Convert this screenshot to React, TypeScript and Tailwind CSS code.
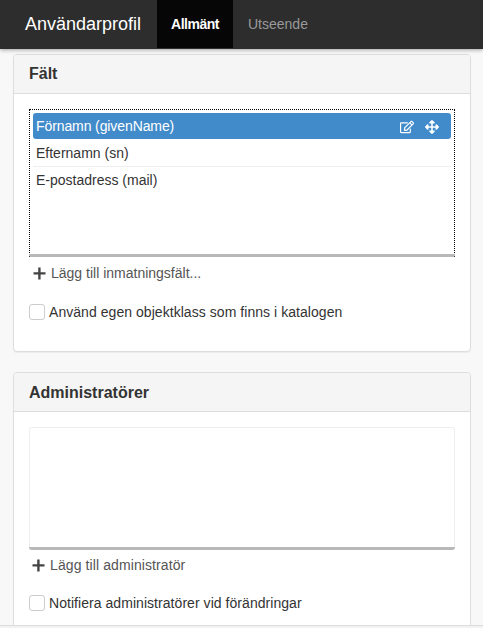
import { FaRegEdit, FaArrowsAlt } from "react-icons/fa";

function Plus() {
  return (
    <svg width="13" height="13" viewBox="0 0 13 13" className="shrink-0">
      <path d="M5.2 0.5h2.4v4.7h4.9v2.4H7.6v4.9H5.2V7.6H0.5V5.2h4.7z" fill="#444" />
    </svg>
  );
}

function Check({ label }: { label: string }) {
  return (
    <div className="flex items-center gap-[4px] h-[16px]">
      <span className="w-[16px] h-[16px] rounded-[3px] border border-[#cccccc] bg-white shrink-0" />
      <span className="text-[14px] tracking-[0.05px] text-[#333]">{label}</span>
    </div>
  );
}

export default function App() {
  return (
    <div className="relative w-[483px] h-[628px] overflow-hidden bg-[#f8f8f8] font-['Liberation_Sans',Arial,sans-serif]">
      <nav className="relative z-10 h-[49px] bg-[#2d2d2d] flex items-stretch shadow-[0_1px_4px_rgba(0,0,0,0.35)]">
        <div className="pl-[25px] w-[157px] pt-[14px] text-[18px] leading-[20px] text-white">Användarprofil</div>
        <div className="w-[76px] h-[48px] bg-[#060606] text-white text-[14px] font-bold tracking-[-0.5px] flex items-center justify-center">Allmänt</div>
        <div className="h-[48px] pl-[15px] text-[#999] text-[14px] flex items-center">Utseende</div>
      </nav>

      <main className="px-[13px] pt-[5px] flex flex-col gap-[20px]">
        <section className="h-[298px] w-[458px] rounded-[4px] border border-[#dddddd] bg-white shadow-[0_1px_1px_rgba(0,0,0,0.05)] overflow-hidden">
          <header className="h-[39px] bg-[#f5f5f5] border-b border-[#dddddd] px-[15px] flex items-center text-[16px] font-bold text-[#333]">Fält</header>
          <div className="px-[15px] pt-[15px]">
            <div className="h-[148px] w-[426px] border border-dotted border-black border-b-0 flex flex-col">
              <div className="flex-1 px-[3px] pt-[3px]">
                <div className="h-[26px] rounded-[3px] bg-[#428bca] text-white text-[14px] pl-[3px] pr-[12px] flex items-center justify-between">
                  <span className="tracking-[-0.1px]">Förnamn (givenName)</span>
                  <span className="flex items-center gap-[11px] pt-[1px]">
                    <FaRegEdit size={14} />
                    <FaArrowsAlt size={14} />
                  </span>
                </div>
                <div className="h-[28px] pt-[1px] border-b border-[#eeeeee] text-[14px] text-[#333] pl-[3px] flex items-center">Efternamn (sn)</div>
                <div className="h-[26px] text-[14px] text-[#333] pl-[3px] flex items-center">E-postadress (mail)</div>
              </div>
              <div className="h-[3px] bg-[#b8b8b8] rounded-b-[2px] -mx-px" />
            </div>
            <div className="mt-[6px] pl-[4px] h-[20px] flex items-center gap-[5px] text-[14px] text-[#555]">
              <Plus />
              <span>Lägg till inmatningsfält...</span>
            </div>
            <div className="mt-[21px]">
              <Check label="Använd egen objektklass som finns i katalogen" />
            </div>
          </div>
        </section>

        <section className="h-[300px] w-[458px] rounded-t-[4px] border border-[#dddddd] bg-white">
          <header className="h-[39px] pt-[1px] bg-[#f5f5f5] border-b border-[#dddddd] rounded-t-[4px] px-[15px] flex items-center text-[16px] font-bold text-[#333]">Administratörer</header>
          <div className="px-[15px] pt-[15px]">
            <div className="h-[123px] w-[426px] rounded-[3px] border border-[#eeeeee] border-b-0 flex flex-col justify-end">
              <div className="h-[3px] bg-[#b8b8b8] rounded-b-[3px] -mx-px" />
            </div>
            <div className="mt-[5px] pl-[3px] h-[20px] flex items-center gap-[5px] text-[14px] text-[#555]">
              <Plus />
              <span className="tracking-[0.1px]">Lägg till administratör</span>
            </div>
            <div className="mt-[20px]">
              <Check label="Notifiera administratörer vid förändringar" />
            </div>
          </div>
        </section>
      </main>

      <div className="absolute left-0 right-0 bottom-0 h-[3px] bg-[#f2f2f2] border-t border-[#dddddd]" />
    </div>
  );
}
